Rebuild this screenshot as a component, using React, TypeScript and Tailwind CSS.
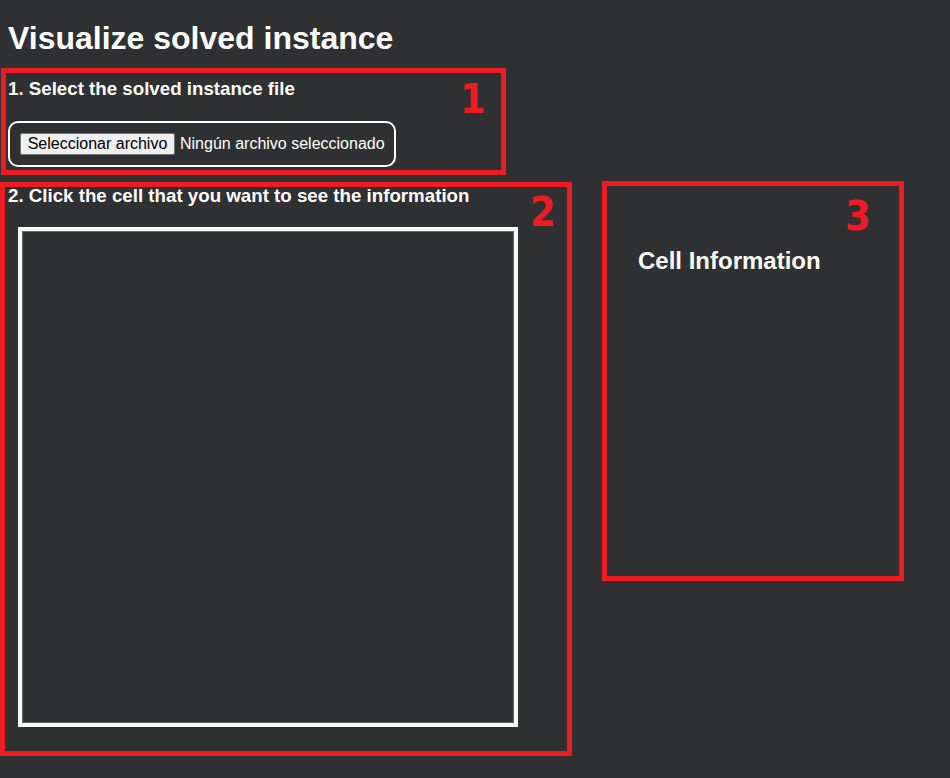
import React from "react";

const digitFont = { fontFamily: '"DejaVu Sans Condensed", "DejaVu Sans", sans-serif' };

export default function App() {
  return (
    <div
      className="w-[950px] h-[778px] overflow-hidden bg-[#2f3032] text-white"
      style={{ fontFamily: '"Liberation Sans", Arial, sans-serif' }}
    >
      <h1 className="ml-2 pt-[20px] text-[32px] leading-[37px] font-bold">
        Visualize solved instance
      </h1>

      {/* Section 1 */}
      <div className="relative ml-[1px] mt-[11px] w-[505px] h-[107px] border-[5px] border-[#ed1c24]">
        <h3 className="ml-[2px] mt-[5px] text-[18.72px] leading-[22px] font-bold">
          1. Select the solved instance file
        </h3>
        <div className="ml-[2px] mt-[21px] w-[388px] h-[46px] rounded-[10px] border-2 border-white p-[10px] flex items-center">
          <button className="h-[22px] w-[155px] shrink-0 bg-[#efefef] border border-[#767676] rounded-[2px] px-[6px] text-[16px] leading-[18px] text-black">
            Seleccionar archivo
          </button>
          <span className="ml-[5px] text-[16px] leading-[18px] whitespace-nowrap">
            Ningún archivo seleccionado
          </span>
        </div>
        <span
          className="absolute left-[454px] top-[6px] text-[41px] leading-none font-bold text-[#ed1c24]"
          style={digitFont}
        >
          1
        </span>
      </div>

      <div className="mt-[2px] flex items-start">
        {/* Section 2 */}
        <div className="relative w-[572px] h-[574px] border-[5px] border-[#ed1c24] mt-[5px]">
          <h3 className="ml-[3px] -mt-[2px] text-[18.72px] leading-[22px] font-bold">
            2. Click the cell that you want to see the information
          </h3>
          <div className="ml-[13px] mt-[20px] w-[500px] h-[500px] border-4 border-white">
            <div className="w-full h-full border border-[#666666]" />
          </div>
          <span
            className="absolute left-[525px] top-[5px] text-[41px] leading-none font-bold text-[#ed1c24]"
            style={digitFont}
          >
            2
          </span>
        </div>

        {/* Section 3 */}
        <div className="relative ml-[30px] mt-[4px] w-[302px] h-[400px] border-[5px] border-[#ed1c24]">
          <h2 className="ml-[31px] mt-[61px] text-[24px] leading-[28px] font-bold">
            Cell Information
          </h2>
          <span
            className="absolute left-[238px] top-[10px] text-[41px] leading-none font-bold text-[#ed1c24]"
            style={digitFont}
          >
            3
          </span>
        </div>
      </div>
    </div>
  );
}
